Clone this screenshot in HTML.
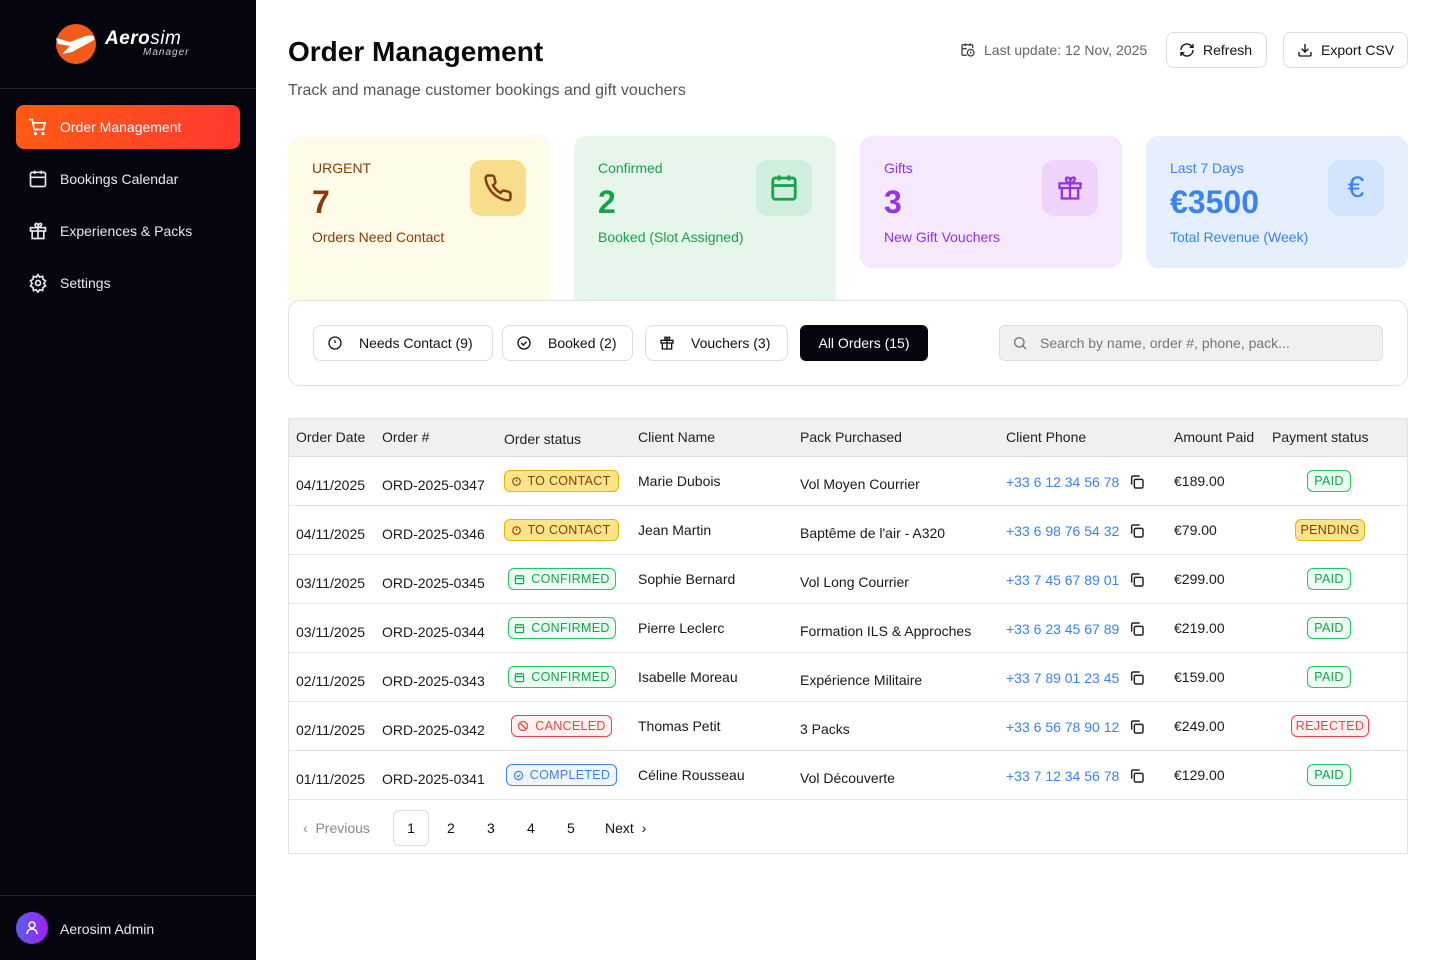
<!DOCTYPE html>
<html><head><meta charset="utf-8"><style>
*{box-sizing:border-box;margin:0;padding:0}
body{width:1440px;height:960px;position:relative;background:#fff;font-family:"Liberation Sans",sans-serif;color:#111;overflow:hidden}
.a{position:absolute}
.sb{left:0;top:0;width:256px;height:960px;background:#05050f}
.nav{left:16px;width:224px;height:44px;border-radius:8px;color:#e8e8ee;font-size:14px;display:flex;align-items:center;padding-left:44px}
.nav svg{position:absolute;left:12px;top:12px}
.card{top:136px;width:262px;border-radius:12px;padding:24px}
.card .t{font-size:14px}
.card .n{font-size:32px;font-weight:bold;margin-top:7px;line-height:38px}
.card .s{font-size:14px;margin-top:8px}
.card .ic{position:absolute;right:24px;top:24px;width:56px;height:56px;border-radius:12px;display:flex;align-items:center;justify-content:center}
.btn{border:1px solid #ddd;border-radius:8px;background:#fff;display:flex;align-items:center;font-size:14px;color:#111}
.th{font-size:14px;color:#222;top:429px}
.row{left:288px;width:1120px;height:49px;border-bottom:1px solid #e5e5e5}
.c{position:absolute;font-size:14px;color:#1a1a1a}
.b{position:absolute;height:22px;border-radius:6px;border:1px solid;font-size:12.5px;display:flex;align-items:center;justify-content:center;gap:6px;letter-spacing:.3px}
.y{background:#fce588;border-color:#eab308;color:#8a3b0a}
.g{background:#ecfdf3;border-color:#22c55e;color:#16a34a}
.r{background:#fef2f2;border-color:#ef4444;color:#ef4444}
.bl{background:#eff6ff;border-color:#3b82f6;color:#3b82f6}
.ph{color:#3b82f6}
</style></head><body>
<div class="a sb"></div>
<svg class="a" style="left:56px;top:24px" width="40" height="40" viewBox="0 0 40 40"><circle cx="20" cy="20" r="20" fill="#f25a1c"/><path d="M0 14 L14 18 L30 12 Q40 10 38 16 L16 28 L6 30 L14 22 L2 20 Z" fill="#fff"/></svg>
<div class="a" style="left:105px;top:28px;color:#fff;font-size:19px;font-weight:bold;font-style:italic;letter-spacing:.5px">Aero<span style="font-weight:normal">sim</span></div>
<div class="a" style="left:143px;top:47px;color:#ccc;font-size:10px;font-style:italic;letter-spacing:1px">Manager</div>
<div class="a" style="left:0;top:88px;width:256px;height:1px;background:#22222e"></div>
<div class="a nav" style="top:105px;background:linear-gradient(90deg,#ff5a14,#ff3a30);color:#fff"><svg width="20" height="20" viewBox="0 0 24 24" fill="none" stroke="#fff" stroke-width="2" stroke-linecap="round"><circle cx="9" cy="20" r="1"/><circle cx="18" cy="20" r="1"/><path d="M2 3h3l2.5 12h11l2-8H6"/></svg>Order Management</div>
<div class="a nav" style="top:157px"><svg width="20" height="20" viewBox="0 0 24 24" fill="none" stroke="#e8e8ee" stroke-width="2"><rect x="3" y="4" width="18" height="17" rx="2"/><path d="M8 2v4M16 2v4M3 10h18"/></svg>Bookings Calendar</div>
<div class="a nav" style="top:209px"><svg width="20" height="20" viewBox="0 0 24 24" fill="none" stroke="#e8e8ee" stroke-width="2"><rect x="3" y="8" width="18" height="4"/><path d="M5 12v9h14v-9M12 8v13M12 8C9 8 7 3 10 3s2 5 2 5 0-5 3-5 0 5-3 5"/></svg>Experiences &amp; Packs</div>
<div class="a nav" style="top:261px"><svg width="20" height="20" viewBox="0 0 24 24" fill="none" stroke="#e8e8ee" stroke-width="2"><circle cx="12" cy="12" r="3"/><path d="M12 2l2 3 3.5-1 .5 3.5 3 2-2 3 2 3-3 2-.5 3.5-3.5-1-2 3-2-3-3.5 1-.5-3.5-3-2 2-3-2-3 3-2 .5-3.5 3.5 1z"/></svg>Settings</div>
<div class="a" style="left:0;top:895px;width:256px;height:1px;background:#22222e"></div>
<div class="a" style="left:16px;top:912px;width:32px;height:32px;border-radius:50%;background:linear-gradient(90deg,#5b5cf0,#a020f0)"><svg width="32" height="32" viewBox="0 0 32 32" fill="none" stroke="#fff" stroke-width="1.5"><circle cx="16" cy="13" r="3"/><path d="M11 22c0-3 2-5 5-5s5 2 5 5"/></svg></div>
<div class="a" style="left:60px;top:921px;color:#e8e8ee;font-size:14px">Aerosim Admin</div>

<div class="a" style="left:288px;top:36px;font-size:28px;font-weight:bold;color:#0a0a0a">Order Management</div>
<div class="a" style="left:288px;top:82px;font-size:16px;color:#555">Track and manage customer bookings and gift vouchers</div>
<svg class="a" style="left:960px;top:42px" width="16" height="16" viewBox="0 0 24 24" fill="none" stroke="#444" stroke-width="2"><path d="M10 20H5a2 2 0 0 1-2-2V6a2 2 0 0 1 2-2h12a2 2 0 0 1 2 2v3M8 2v4M15 2v4M3 10h7"/><circle cx="16" cy="16" r="5"/><path d="M16 14v2l1 1"/></svg>
<div class="a" style="left:984px;top:42px;font-size:14px;color:#666">Last update: 12 Nov, 2025</div>
<div class="a btn" style="left:1166px;top:32px;width:101px;height:36px;padding-left:12px;gap:8px"><svg width="16" height="16" viewBox="0 0 24 24" fill="none" stroke="#111" stroke-width="2"><path d="M3 12a9 9 0 0 1 15-6.7L21 8M21 3v5h-5M21 12a9 9 0 0 1-15 6.7L3 16M3 21v-5h5"/></svg>Refresh</div>
<div class="a btn" style="left:1283px;top:32px;width:125px;height:36px;padding-left:13px;gap:8px"><svg width="16" height="16" viewBox="0 0 24 24" fill="none" stroke="#111" stroke-width="2"><path d="M21 15v4a2 2 0 0 1-2 2H5a2 2 0 0 1-2-2v-4M7 10l5 5 5-5M12 15V3"/></svg>Export CSV</div>

<div class="a card" style="left:288px;height:180px;background:#fefbe8;color:#8a3b0a"><div class="t">URGENT</div><div class="n">7</div><div class="s">Orders Need Contact</div><div class="ic" style="background:#f8dd8c"><svg width="30" height="30" viewBox="0 0 24 24" fill="none" stroke="#8a3b0a" stroke-width="2"><path d="M22 16.9v3a2 2 0 0 1-2.2 2 19.8 19.8 0 0 1-8.6-3.1 19.5 19.5 0 0 1-6-6A19.8 19.8 0 0 1 2.1 4.2 2 2 0 0 1 4.1 2h3a2 2 0 0 1 2 1.7c.1 1 .4 1.9.7 2.8a2 2 0 0 1-.5 2.1L8 9.9a16 16 0 0 0 6 6l1.3-1.3a2 2 0 0 1 2.1-.4c.9.3 1.8.6 2.8.7a2 2 0 0 1 1.7 2z"/></svg></div></div>
<div class="a card" style="left:574px;height:180px;background:#e6f6ea;color:#16a34a"><div class="t">Confirmed</div><div class="n">2</div><div class="s">Booked (Slot Assigned)</div><div class="ic" style="background:#cfeedb"><svg width="30" height="30" viewBox="0 0 24 24" fill="none" stroke="#16a34a" stroke-width="2.2"><rect x="3" y="4" width="18" height="17" rx="2"/><path d="M8 2v4M16 2v4M3 10h18"/></svg></div></div>
<div class="a card" style="left:860px;height:132px;background:#f6e8fd;color:#9333ea"><div class="t">Gifts</div><div class="n">3</div><div class="s">New Gift Vouchers</div><div class="ic" style="background:#efd3fb"><svg width="28" height="28" viewBox="0 0 24 24" fill="none" stroke="#9333ea" stroke-width="2"><rect x="3" y="8" width="18" height="4"/><path d="M5 12v9h14v-9M12 8v13M12 8C9 8 7 3 10 3s2 5 2 5 0-5 3-5 0 5-3 5"/></svg></div></div>
<div class="a card" style="left:1146px;height:132px;background:#e5effe;color:#3b82f6"><div class="t">Last 7 Days</div><div class="n">€3500</div><div class="s">Total Revenue (Week)</div><div class="ic" style="background:#d3e4fd;font-size:30px;color:#3b82f6">€</div></div>

<div class="a" style="left:288px;top:300px;width:1120px;height:86px;background:#fff;border:1px solid #e3e3e3;border-radius:12px"></div>
<div class="a btn" style="left:313px;top:325px;width:180px;height:36px;padding-left:13px;gap:16px"><svg width="16" height="16" viewBox="0 0 24 24" fill="none" stroke="#111" stroke-width="2"><circle cx="12" cy="12" r="9"/><path d="M12 8v4M12 16h0"/></svg>Needs Contact (9)</div>
<div class="a btn" style="left:502px;top:325px;width:131px;height:36px;padding-left:13px;gap:16px"><svg width="16" height="16" viewBox="0 0 24 24" fill="none" stroke="#111" stroke-width="2"><circle cx="12" cy="12" r="9"/><path d="M8 12l3 3 5-5"/></svg>Booked (2)</div>
<div class="a btn" style="left:645px;top:325px;width:143px;height:36px;padding-left:13px;gap:16px"><svg width="16" height="16" viewBox="0 0 24 24" fill="none" stroke="#111" stroke-width="2"><rect x="3" y="8" width="18" height="4"/><path d="M5 12v9h14v-9M12 8v13M12 8C9 8 7 3 10 3s2 5 2 5 0-5 3-5 0 5-3 5"/></svg>Vouchers (3)</div>
<div class="a" style="left:800px;top:325px;width:128px;height:36px;background:#05050f;border-radius:6px;color:#fff;font-size:14px;display:flex;align-items:center;justify-content:center">All Orders (15)</div>
<div class="a" style="left:999px;top:325px;width:384px;height:36px;background:#f0f0f0;border:1px solid #ddd;border-radius:6px;font-size:14px;color:#777;display:flex;align-items:center;padding-left:12px;gap:12px"><svg width="16" height="16" viewBox="0 0 24 24" fill="none" stroke="#777" stroke-width="2"><circle cx="11" cy="11" r="7"/><path d="M21 21l-5-5"/></svg>Search by name, order #, phone, pack...</div>

<div class="a" style="left:288px;top:418px;width:1120px;height:436px;border:1px solid #e3e3e3"></div>
<div class="a" style="left:289px;top:419px;width:1118px;height:38px;background:#f0f0f0;border-bottom:1px solid #ddd"></div>
<div class="a th" style="left:296px">Order Date</div><div class="a th" style="left:382px">Order #</div><div class="a th" style="left:504px;top:431px">Order status</div><div class="a th" style="left:638px">Client Name</div><div class="a th" style="left:800px">Pack Purchased</div><div class="a th" style="left:1006px">Client Phone</div><div class="a th" style="left:1174px">Amount Paid</div><div class="a th" style="left:1272px">Payment status</div>

<div id="rows"></div>
<script>
const ck='<svg width="9" height="9" viewBox="0 0 24 24" fill="none" stroke="currentColor" stroke-width="3"><circle cx="12" cy="12" r="10"/><path d="M12 7v5M12 16h0"/></svg>';
const cal='<svg width="11" height="11" viewBox="0 0 24 24" fill="none" stroke="currentColor" stroke-width="2.5"><rect x="3" y="4" width="18" height="17" rx="2"/><path d="M3 10h18M8 2v4M16 2v4"/></svg>';
const ban='<svg width="12" height="12" viewBox="0 0 24 24" fill="none" stroke="currentColor" stroke-width="2.5"><circle cx="12" cy="12" r="9"/><path d="M6 6l12 12"/></svg>';
const cc='<svg width="11" height="11" viewBox="0 0 24 24" fill="none" stroke="currentColor" stroke-width="2.5"><circle cx="12" cy="12" r="9"/><path d="M8 12l3 3 5-5"/></svg>';
const S={y:['y',504,115,ck,'TO CONTACT'],g:['g',508,108,cal,'CONFIRMED'],r:['r',511,101,ban,'CANCELED'],b:['bl',506,111,cc,'COMPLETED']};
const P={paid:['g',1307,44,'PAID'],pend:['y',1295,70,'PENDING'],rej:['r',1291,78,'REJECTED']};
const R=[['04/11/2025','ORD-2025-0347','y','Marie Dubois','Vol Moyen Courrier','+33 6 12 34 56 78','€189.00','paid'],
['04/11/2025','ORD-2025-0346','y','Jean Martin',"Baptême de l'air - A320",'+33 6 98 76 54 32','€79.00','pend'],
['03/11/2025','ORD-2025-0345','g','Sophie Bernard','Vol Long Courrier','+33 7 45 67 89 01','€299.00','paid'],
['03/11/2025','ORD-2025-0344','g','Pierre Leclerc','Formation ILS & Approches','+33 6 23 45 67 89','€219.00','paid'],
['02/11/2025','ORD-2025-0343','g','Isabelle Moreau','Expérience Militaire','+33 7 89 01 23 45','€159.00','paid'],
['02/11/2025','ORD-2025-0342','r','Thomas Petit','3 Packs','+33 6 56 78 90 12','€249.00','rej'],
['01/11/2025','ORD-2025-0341','b','Céline Rousseau','Vol Découverte','+33 7 12 34 56 78','€129.00','paid']];
let h='';
R.forEach((r,i)=>{const t=457+49*i,c=t+25;const s=S[r[2]],p=P[r[7]];
h+=`<div class="a row" style="top:${t}px"></div>
<div class="c" style="left:296px;top:${c-5}px">${r[0]}</div><div class="c" style="left:382px;top:${c-5}px">${r[1]}</div>
<div class="b ${s[0]}" style="left:${s[1]}px;width:${s[2]}px;top:${c-12}px">${s[3]}${s[4]}</div>
<div class="c" style="left:638px;top:${c-9}px">${r[3]}</div><div class="c" style="left:800px;top:${c-6}px">${r[4]}</div>
<div class="c ph" style="left:1006px;top:${c-8}px">${r[5]}</div>
<svg class="a" style="left:1129px;top:${c-8}px" width="16" height="16" viewBox="0 0 24 24" fill="none" stroke="#222" stroke-width="2.2"><rect x="8" y="8" width="13" height="13" rx="2"/><path d="M4 16V5a2 2 0 0 1 2-2h10"/></svg>
<div class="c" style="left:1174px;top:${c-9}px">${r[6]}</div>
<div class="b ${p[0]}" style="left:${p[1]}px;width:${p[2]}px;top:${c-12}px">${p[3]}</div>`;});
document.getElementById('rows').innerHTML=h;
</script>
<div class="a" style="left:303px;top:820px;font-size:14px;color:#888">‹&nbsp;&nbsp;Previous</div>
<div class="a" style="left:393px;top:810px;width:36px;height:36px;border:1px solid #ddd;border-radius:6px;font-size:14px;display:flex;align-items:center;justify-content:center">1</div>
<div class="a" style="left:447px;top:820px;font-size:14px">2</div><div class="a" style="left:487px;top:820px;font-size:14px">3</div><div class="a" style="left:527px;top:820px;font-size:14px">4</div><div class="a" style="left:567px;top:820px;font-size:14px">5</div>
<div class="a" style="left:605px;top:820px;font-size:14px">Next&nbsp;&nbsp;›</div>
</body></html>
